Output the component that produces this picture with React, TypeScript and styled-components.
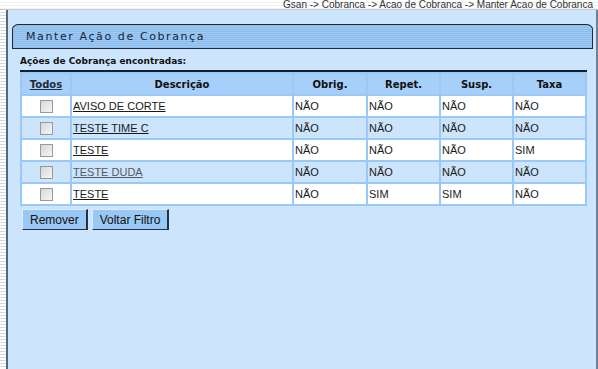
import React from 'react'
import styled, { createGlobalStyle } from 'styled-components'

interface Acao {
    descricao: string,
    obrig: string,
    repet: string,
    susp: string,
    taxa: string,
    visited?: boolean
}

const acoes: Acao[] = [
    { descricao: 'AVISO DE CORTE', obrig: 'NÃO', repet: 'NÃO', susp: 'NÃO', taxa: 'NÃO' },
    { descricao: 'TESTE TIME C', obrig: 'NÃO', repet: 'NÃO', susp: 'NÃO', taxa: 'NÃO' },
    { descricao: 'TESTE', obrig: 'NÃO', repet: 'NÃO', susp: 'NÃO', taxa: 'SIM' },
    { descricao: 'TESTE DUDA', obrig: 'NÃO', repet: 'NÃO', susp: 'NÃO', taxa: 'NÃO', visited: true },
    { descricao: 'TESTE', obrig: 'NÃO', repet: 'SIM', susp: 'SIM', taxa: 'NÃO' },
]

const App = () => {
    return (
        <>
            <GlobalStyle />
            <Page>
                <TopBar>
                    <Breadcrumb>Gsan -&gt; Cobranca -&gt; Acao de Cobranca -&gt; Manter Acao de Cobranca</Breadcrumb>
                </TopBar>
                <Body>
                    <SideStripes />
                    <Panel>
                        <TitleTab>Manter Ação de Cobrança</TitleTab>
                        <Caption>Ações de Cobrança encontradas:</Caption>
                        <Table>
                            <colgroup>
                                <col style={{ width: 48 }} />
                                <col style={{ width: 220 }} />
                                <col style={{ width: 72 }} />
                                <col style={{ width: 71 }} />
                                <col style={{ width: 71 }} />
                                <col />
                            </colgroup>
                            <thead>
                                <tr>
                                    <HeadCell><TodosLink>Todos</TodosLink></HeadCell>
                                    <HeadCell>Descrição</HeadCell>
                                    <HeadCell>Obrig.</HeadCell>
                                    <HeadCell>Repet.</HeadCell>
                                    <HeadCell>Susp.</HeadCell>
                                    <HeadCell>Taxa</HeadCell>
                                </tr>
                            </thead>
                            <tbody>
                                {acoes.map((a, i) => (
                                    <Row key={i} $alt={i % 2 === 1}>
                                        <CheckCell><Check /></CheckCell>
                                        <Cell><DescLink $visited={a.visited}>{a.descricao}</DescLink></Cell>
                                        <Cell>{a.obrig}</Cell>
                                        <Cell>{a.repet}</Cell>
                                        <Cell>{a.susp}</Cell>
                                        <Cell>{a.taxa}</Cell>
                                    </Row>
                                ))}
                            </tbody>
                        </Table>
                        <Actions>
                            <Button>Remover</Button>
                            <Button>Voltar Filtro</Button>
                        </Actions>
                    </Panel>
                </Body>
            </Page>
        </>
    )
}

export default App

const GlobalStyle = createGlobalStyle`
    html, body {
        margin: 0;
        padding: 0;
        background: #ffffff;
        font-family: "Liberation Sans", Arial, sans-serif;
    }
`

const Page = styled.div`
    width: 598px;
    height: 369px;
    display: flex;
    flex-direction: column;
    overflow: hidden;
`

const TopBar = styled.div`
    height: 9px;
    display: flex;
    justify-content: flex-end;
    align-items: flex-end;
    padding-right: 5px;
    border-bottom: 1px solid #c9c9c9;
    background: repeating-linear-gradient(to bottom, #ffffff 0 2px, #eef0f2 2px 3px);
`

const Breadcrumb = styled.div`
    font-size: 10px;
    line-height: 10px;
    color: #333333;
    white-space: nowrap;
    margin-bottom: -1px;
`

const Body = styled.div`
    flex: 1;
    display: flex;
`

const SideStripes = styled.div`
    width: 7px;
    background: repeating-linear-gradient(to bottom, #ffffff 0 2px, #d6dbe0 2px 3px);
`

const Panel = styled.div`
    flex: 1;
    background: #cce5fd;
    border-left: 2px solid #56677a;
    border-right: 2px solid #6f8095;
    padding: 14px 3px 0 4px;
    display: flex;
    flex-direction: column;
`

const TitleTab = styled.div`
    height: 23px;
    display: flex;
    align-items: center;
    padding-left: 13px;
    border: 1px solid #1d2a38;
    border-radius: 7px 7px 0 0 / 5px 5px 0 0;
    background: repeating-linear-gradient(to bottom, #8cbcec 0 1px, #9fcaf3 1px 2px);
    font-family: "DejaVu Sans", Verdana, sans-serif;
    font-size: 11px;
    letter-spacing: 1.6px;
    color: #1a2533;
`

const Caption = styled.div`
    margin: 7px 0 0 8px;
    font-family: "DejaVu Sans", Verdana, sans-serif;
    font-size: 9px;
    font-weight: bold;
    color: #111111;
`

const Table = styled.table`
    margin: 4px 6px 0 8px;
    width: 567px;
    table-layout: fixed;
    border-collapse: separate;
    border-spacing: 2px;
    background: #99c9f7;
    border-top: 2px solid #15202c;
    font-size: 11px;
`

const HeadCell = styled.th`
    height: 20px;
    padding: 0;
    font-family: "DejaVu Sans", Verdana, sans-serif;
    font-size: 10px;
    font-weight: bold;
    text-align: center;
    color: #111111;
    background: #a6d0f9;
`

const TodosLink = styled.span`
    text-decoration: underline;
    color: #1c2a3a;
`

const Row = styled.tr<{ $alt: boolean }>`
    background: ${props => props.$alt ? '#cce4fc' : '#ffffff'};
`

const Cell = styled.td`
    height: 20px;
    padding: 0 0 0 1px;
    color: #1a1a1a;
    white-space: nowrap;
`

const CheckCell = styled(Cell)`
    text-align: center;
    padding: 0;
`

const Check = styled.span`
    display: inline-block;
    vertical-align: middle;
    width: 11px;
    height: 11px;
    border: 1px solid #999999;
    background: linear-gradient(135deg, #d6d6d6, #f6f6f6);
`

const DescLink = styled.span<{ $visited?: boolean }>`
    text-decoration: underline;
    color: ${props => props.$visited ? '#555a62' : '#1a1a1a'};
`

const Actions = styled.div`
    display: flex;
    gap: 4px;
    margin: 3px 0 0 10px;
`

const Button = styled.button`
    height: 21px;
    padding: 0 7px;
    font-family: "Liberation Sans", Arial, sans-serif;
    font-size: 12px;
    color: #111111;
    background: #99c8f5;
    border: 1px solid;
    border-color: #d8ecff #20324a #20324a #d8ecff;
    border-right-width: 2px;
    cursor: pointer;
`
